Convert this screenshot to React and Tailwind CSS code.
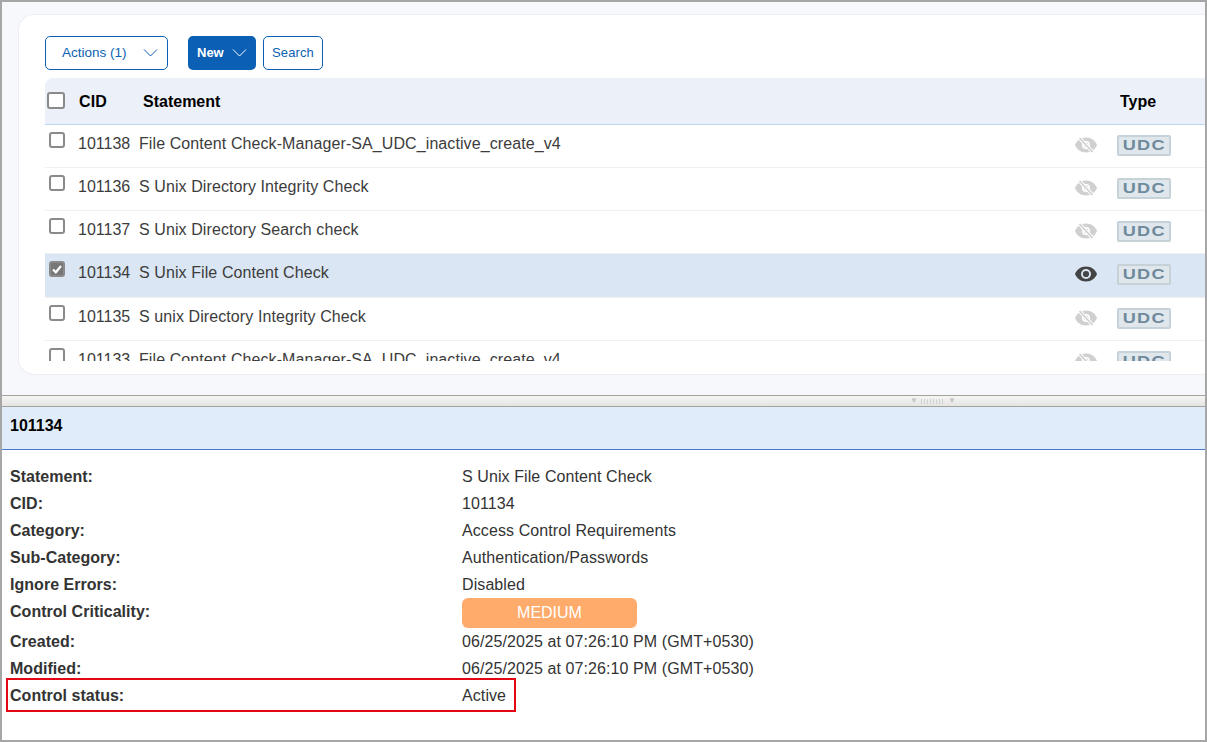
const rows = [
  { cid: '101138', statement: 'File Content Check-Manager-SA_UDC_inactive_create_v4' },
  { cid: '101136', statement: 'S Unix Directory Integrity Check' },
  { cid: '101137', statement: 'S Unix Directory Search check' },
  { cid: '101134', statement: 'S Unix File Content Check', selected: true },
  { cid: '101135', statement: 'S unix Directory Integrity Check' },
  { cid: '101133', statement: 'File Content Check-Manager-SA_UDC_inactive_create_v4' },
];

const details = [
  ['Statement:', 'S Unix File Content Check'],
  ['CID:', '101134'],
  ['Category:', 'Access Control Requirements'],
  ['Sub-Category:', 'Authentication/Passwords'],
  ['Ignore Errors:', 'Disabled'],
];

function Chevron({ className }) {
  return (
    <svg className={className} width="15" height="8" viewBox="0 0 15 8" fill="none" stroke="currentColor" strokeWidth="1">
      <path d="M1 0.5l6.5 6.5 6.5-6.5" />
    </svg>
  );
}

function Checkbox({ checked }) {
  return (
    <span className={`flex h-4 w-4 items-center justify-center rounded-[3px] border-2 border-[#8a8a8a] ${checked ? 'bg-[#777]' : 'bg-white'}`}>
      {checked && (
        <svg width="12" height="12" viewBox="0 0 12 12" fill="none" stroke="white" strokeWidth="2.2">
          <path d="M2 6.5l2.8 2.8L10 3" />
        </svg>
      )}
    </span>
  );
}

function Eye({ on }) {
  const outline = 'M12 0.5C6.5 0.5 2.5 4 1 8c1.5 4 5.5 7.5 11 7.5S21.5 12 23 8c-1.5-4-5.5-7.5-11-7.5z';
  if (on) {
    return (
      <svg width="24" height="16" viewBox="0 0 24 16">
        <path d={outline} fill="#444" />
        <circle cx="12" cy="8" r="5" fill="#dae6f3" />
        <circle cx="12" cy="8" r="3.1" fill="#444" />
      </svg>
    );
  }
  return (
    <svg width="24" height="16" viewBox="0 0 24 16">
      <path d={outline} fill="#d0d0d0" />
      <circle cx="12" cy="8" r="4" fill="#fff" />
      <circle cx="12" cy="8" r="2.4" fill="#d0d0d0" />
      <path d="M5 0.5l14 15" stroke="#fff" strokeWidth="3.6" />
      <path d="M5.5 1l13 14" stroke="#d0d0d0" strokeWidth="1.8" />
    </svg>
  );
}

function Row({ row }) {
  return (
    <div className={`flex shrink-0 border-b border-[#f0f0f0] text-[#3c3c3c] ${row.selected ? 'h-[44px] bg-[#dae6f3]' : 'h-[43px] bg-white'}`}>
      <div className="w-[33px] pl-1 pt-[7px]"><Checkbox checked={row.selected} /></div>
      <div className="w-[61px] pt-[7px]">{row.cid}</div>
      <div className="flex-1 pt-[7px] tracking-[0.09px]">{row.statement}</div>
      <div className="w-[43px] pt-[12px]">
        <Eye on={row.selected} />
      </div>
      <div className="w-[88px] pt-[10px]">
        <span className="flex h-[21px] w-[54px] items-center justify-center rounded-[2px] border-2 border-[#c6d1d8] bg-[#dfe7ec] text-[14.5px] font-bold leading-none text-[#6f8a9c]">
          <span className="inline-block scale-x-125 tracking-[1px]">UDC</span>
        </span>
      </div>
    </div>
  );
}

export default function App() {
  return (
    <div className="flex h-[742px] w-[1207px] flex-col overflow-hidden border-2 border-[#a6a6a6] bg-white font-['Liberation_Sans',Arial,sans-serif] text-base">
      <div className="h-[393px] shrink-0 bg-[#f6f8fc] pl-4 pt-3 pb-5">
        <div className="h-full rounded-l-2xl border border-r-0 border-[#eceef2] bg-white pl-[26px] pt-[21px]">
          <div className="flex items-start">
            <button className="flex h-[34px] w-[123px] items-center rounded-[5px] border border-[#0b5fb4] pl-[16px] text-[13.5px] text-[#0b5fb4]">
              Actions (1)
              <Chevron className="ml-[16px]" />
            </button>
            <button className="ml-5 flex h-[34px] w-[68px] items-center rounded-[5px] bg-[#0b5fb4] pl-[9px] text-[13px] font-bold text-white">
              New
              <Chevron className="ml-2" />
            </button>
            <button className="ml-[7px] h-[34px] w-[60px] rounded-[5px] border border-[#0b5fb4] text-[13px] tracking-[0.1px] text-[#0b5fb4]">Search</button>
          </div>
          <div className="mt-2 flex h-[47px] items-center rounded-tl-lg border-b border-[#bcd6ee] bg-[#ecf1f9] pt-[1px] font-bold text-black">
            <div className="w-[34px] pl-[2px]"><span className="-mt-[3px] block h-[17px] w-[18px] rounded-[3px] border-2 border-[#8a8a8a] bg-white" /></div>
            <div className="w-[64px] tracking-[0.1px]">CID</div>
            <div className="flex-1">Statement</div>
            <div className="w-[85px]">Type</div>
          </div>
          <div className="flex h-[236px] flex-col overflow-hidden">
            {rows.map(row => <Row key={row.cid} row={row} />)}
          </div>
        </div>
      </div>
      <div className="relative h-[12px] shrink-0 border-y border-[#a5a29c] bg-gradient-to-b from-[#f6f6f4] to-[#e4e4e2]">
        <div className="absolute left-[908px] top-[1px] flex items-center gap-[3px] text-[8px] leading-none text-[#c4c4c4]">
          <span>▼</span>
          <span className="h-[5px] w-6 bg-[repeating-linear-gradient(90deg,#d0d0d0_0,#d0d0d0_1px,transparent_1px,transparent_3px)]" />
          <span>▼</span>
        </div>
      </div>
      <div className="flex h-[43px] shrink-0 items-center border-b border-[#4a76c8] bg-[#e0ecf9] pb-[4px] pl-2 font-bold text-black">101134</div>
      <div className="pl-2 pt-[15px] text-[#333]">
        {details.map(([label, value]) => (
          <div key={label} className="flex h-[27px]">
            <div className="w-[452px] font-bold tracking-[0.03px]">{label}</div>
            <div className="tracking-[0.09px]">{value}</div>
          </div>
        ))}
        <div className="flex h-[27px]">
          <div className="w-[452px] font-bold tracking-[0.03px]">Control Criticality:</div>
          <div className="-mt-[2px] flex h-[30px] w-[175px] items-center justify-center rounded-md bg-[#ffab6b] text-white">MEDIUM</div>
        </div>
        <div className="flex h-[27px] items-end">
          <div className="w-[452px] font-bold tracking-[0.03px]">Created:</div>
          <div className="tracking-[0.09px]">06/25/2025 at 07:26:10 PM (GMT+0530)</div>
        </div>
        <div className="flex h-[27px] items-end">
          <div className="w-[452px] font-bold tracking-[0.03px]">Modified:</div>
          <div className="tracking-[0.09px]">06/25/2025 at 07:26:10 PM (GMT+0530)</div>
        </div>
        <div className="relative flex h-[27px] items-end">
          <div className="w-[452px] font-bold tracking-[0.03px]">Control status:</div>
          <div className="tracking-[0.09px]">Active</div>
          <div className="absolute -left-[4px] -top-[3px] h-[34px] w-[510px] border-2 border-[#e30613]" />
        </div>
      </div>
    </div>
  );
}
